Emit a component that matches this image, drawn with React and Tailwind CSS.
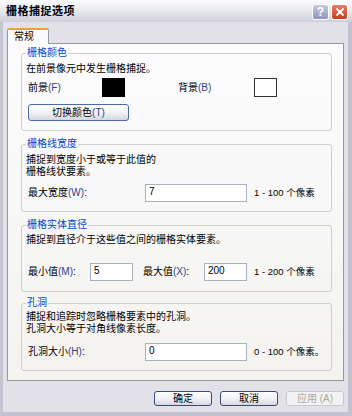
const font = { fontFamily: '"Liberation Sans", "Noto Sans CJK SC", sans-serif' };

function Key({ text, k }) {
  return (
    <span>
      {text}
      <span className="text-[#34408a]">({k})</span>
    </span>
  );
}

function Group({ title, className = "", children }) {
  return (
    <fieldset
      className={
        "mx-[13px] mr-[11px] rounded-[3px] border border-[#d0d0c8] px-[4px] " + className
      }
    >
      <legend className="ml-0 px-[1px] text-[10px] leading-[12px] text-[#0046d5]">{title}</legend>
      {children}
    </fieldset>
  );
}

function Field({ value, className = "" }) {
  return (
    <div
      className={
        "h-[18px] shrink-0 border border-[#a9b1bd] bg-white px-[3px] pt-[1px] text-[10px] leading-[12px] text-black " +
        className
      }
    >
      {value}
    </div>
  );
}

function XpButton({ children, disabled, className = "" }) {
  return (
    <div
      className={[
        "flex items-center justify-center rounded-[3px] border text-[10px] leading-none",
        disabled
          ? "border-[#c8c8cc] bg-[#f2f2f4] text-[#aca899]"
          : "border-[#3c4a6e] bg-gradient-to-b from-white via-[#f2f2f6] to-[#d6d6e0] text-black",
        className
      ].join(" ")}
    >
      {children}
    </div>
  );
}

export default function App() {
  return (
    <div
      className="flex h-[416px] w-[352px] flex-col overflow-hidden bg-[#c4c3d0] text-black"
      style={font}
    >
      {/* title bar */}
      <div className="flex h-[22px] shrink-0 items-center justify-between bg-gradient-to-b from-[#fdfdff] via-[#e8e8f0] to-[#cfcfdb] pl-[6px] pr-[4px]">
        <span className="text-[11px] font-bold tracking-[0.5px]">栅格捕捉选项</span>
        <div className="flex gap-[2px] pt-[1px]">
          <div className="flex h-[16px] w-[17px] items-center justify-center rounded-[3px] border border-white bg-gradient-to-b from-[#c7cbe2] to-[#8e95ba] text-[12px] font-bold leading-none text-white">
            ?
          </div>
          <div className="flex h-[16px] w-[17px] items-center justify-center rounded-[3px] border border-white bg-gradient-to-b from-[#ec7a62] to-[#c63a22]">
            <svg width="10" height="10" viewBox="0 0 10 10">
              <path d="M1.5 1.5 L8.5 8.5 M8.5 1.5 L1.5 8.5" stroke="white" strokeWidth="1.8" />
            </svg>
          </div>
        </div>
      </div>

      {/* body */}
      <div className="mb-[4px] ml-[3px] mr-[4px] flex flex-1 flex-col bg-[#e2e1e7] px-[4px] pt-[6px]">
        {/* tab */}
        <div className="flex">
          <div className="relative z-10 -mb-px flex h-[16px] w-[42px] items-start rounded-t-[2px] border-x border-t-[2px] border-x-[#919b9c] border-t-[#f0a030] bg-[#fcfcfe] pl-[6px] pt-[1px] text-[10px] leading-[12px]">
            常规
          </div>
        </div>

        {/* panel */}
        <div className="flex h-[338px] flex-col border border-[#919b9c] bg-gradient-to-b from-[#fcfcfe] to-[#f4f3f0] pt-[3px] text-[10px] leading-[12px]">
          <Group title="栅格颜色" className="pb-[9px]">
            <div className="mt-[4px]">在前景像元中发生栅格捕捉。</div>
            <div className="ml-[2px] mt-[3px] flex h-[19px] items-center">
              <span className="w-[74px]">
                <Key text="前景" k="F" />
              </span>
              <div className="h-[19px] w-[23px] bg-black" />
              <span className="ml-[53px] w-[76px]">
                <Key text="背景" k="B" />
              </span>
              <div className="h-[19px] w-[23px] border border-[#333] bg-white" />
            </div>
            <XpButton className="ml-[2px] mt-[7px] h-[17px] w-[101px] border-[#4a6aa8]">
              <Key text="切换颜色" k="T" />
            </XpButton>
          </Group>

          <Group title="栅格线宽度" className="mt-[7px] pb-[9px]">
            <div className="mt-[4px]">
              捕捉到宽度小于或等于此值的
              <br />
              栅格线状要素。
            </div>
            <div className="ml-[2px] mt-[6px] flex items-center whitespace-nowrap">
              <span className="w-[117px]">
                <Key text="最大宽度" k="W" />:
              </span>
              <Field value="7" className="w-[102px]" />
              <span className="ml-[7px] text-[9.5px]">1 - 100 个像素</span>
            </div>
          </Group>

          <Group title="栅格实体直径" className="mt-[7px] pb-[10px]">
            <div className="mt-[3px]">捕捉到直径介于这些值之间的栅格实体要素。</div>
            <div className="ml-[2px] mt-[17px] flex items-center whitespace-nowrap">
              <span className="w-[62px]">
                <Key text="最小值" k="M" />:
              </span>
              <Field value="5" className="w-[43px]" />
              <span className="ml-[10px] w-[61px]">
                <Key text="最大值" k="X" />:
              </span>
              <Field value="200" className="w-[43px]" />
              <span className="ml-[7px] text-[9.5px]">1 - 200 个像素</span>
            </div>
          </Group>

          <Group title="孔洞" className="mt-[5px] pb-[9px]">
            <div className="mt-[2px]">
              捕捉和追踪时忽略栅格要素中的孔洞。
              <br />
              孔洞大小等于对角线像素长度。
            </div>
            <div className="ml-[2px] mt-[8px] flex items-center whitespace-nowrap">
              <span className="w-[117px]">
                <Key text="孔洞大小" k="H" />:
              </span>
              <Field value="0" className="w-[102px]" />
              <span className="ml-[7px] text-[9.5px]">0 - 100 个像素。</span>
            </div>
          </Group>
        </div>

        {/* buttons */}
        <div className="mt-[10px] flex justify-end gap-[8px]">
          <XpButton className="h-[15px] w-[58px]">确定</XpButton>
          <XpButton className="h-[15px] w-[58px]">取消</XpButton>
          <XpButton disabled className="h-[15px] w-[58px]">
            应用 (A)
          </XpButton>
        </div>
      </div>
    </div>
  );
}
